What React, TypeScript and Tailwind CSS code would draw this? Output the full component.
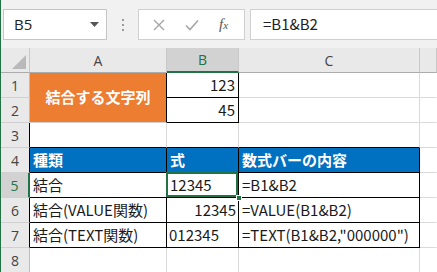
import { ReactNode } from 'react';

const JP = 'font-["Noto_Sans_CJK_JP",sans-serif]';

function Cell({
  r = 'border-r-[#dadada]',
  b = 'border-b-[#dadada]',
  className = '',
  children,
}: {
  r?: string;
  b?: string;
  className?: string;
  children?: ReactNode;
}) {
  return (
    <div
      className={`relative flex items-center overflow-hidden whitespace-nowrap border-r border-b text-[15px] text-[#1a1a1a] ${r} ${b} ${className}`}
    >
      {children}
    </div>
  );
}

function RowHead({
  n,
  selected,
  r = 'border-r-[#bdbdbd]',
}: {
  n: number;
  selected?: boolean;
  r?: string;
}) {
  return (
    <div
      className={`flex items-center justify-center border-b border-b-[#d0d0d0] font-["Open_Sans",sans-serif] text-[14px] ${
        selected
          ? 'border-r-2 border-r-[#217346] bg-[#d2d2d2] text-[#217346]'
          : `border-r bg-[#e9e9e9] text-[#444] ${r}`
      }`}
    >
      {n}
    </div>
  );
}

function ColHead({ label, selected }: { label: string; selected?: boolean }) {
  return (
    <div
      className={`flex items-center justify-center border-r border-r-[#c8c8c8] font-["Open_Sans",sans-serif] text-[14px] ${
        selected
          ? 'border-b-2 border-b-[#217346] bg-[#d2d2d2] text-[#217346]'
          : 'border-b border-b-[#ababab] bg-[#e9e9e9] text-[#444]'
      }`}
    >
      {label}
    </div>
  );
}

function Toolbar() {
  return (
    <div className="flex h-[48px] items-start bg-[#f1f1f1] pt-[9px] pl-[2px]">
      <div className="flex h-[31px] w-[104px] items-center justify-between border border-[#c6c6c6] bg-white pr-[7px] pl-[10px]">
        <span className='font-["Open_Sans",sans-serif] text-[15px] text-[#222]'>B5</span>
        <svg width="9" height="5" viewBox="0 0 9 5">
          <path d="M0 0h9L4.5 5z" fill="#555" />
        </svg>
      </div>
      <div className="flex h-[31px] w-[31px] flex-col items-center justify-center gap-[3px]">
        <span className="size-[2px] bg-[#9a9a9a]" />
        <span className="size-[2px] bg-[#9a9a9a]" />
        <span className="size-[2px] bg-[#9a9a9a]" />
      </div>
      <div className="flex h-[31px] w-[107px] items-center border border-[#d0d0d0] bg-white">
        <svg width="14" height="14" viewBox="0 0 14 14" className="ml-[13px]">
          <path d="M2 2l10 10M12 2L2 12" stroke="#a6a6a6" strokeWidth="1.4" />
        </svg>
        <svg width="16" height="14" viewBox="0 0 16 14" className="ml-[18px]">
          <path d="M2 7.5l4 4 8-9" stroke="#a6a6a6" strokeWidth="1.6" fill="none" />
        </svg>
        <span className='ml-[19px] font-["Liberation_Serif",serif] text-[15px] text-[#555] italic'>
          f<span className="text-[11px]">x</span>
        </span>
      </div>
      <div className="ml-[5px] flex h-[31px] flex-1 items-center border border-r-0 border-[#d0d0d0] bg-white pl-[12px]">
        <span className={`${JP} text-[15px] text-[#222]`}>=B1&amp;B2</span>
      </div>
    </div>
  );
}

export default function App() {
  const black = 'border-r-black';
  const blackB = 'border-b-black';
  return (
    <div className="h-[272px] w-[437px] overflow-hidden border-l border-l-[#217346] bg-[#f1f1f1]">
      <Toolbar />
      <div
        className={`grid grid-cols-[29px_137px_72px_181px_1fr] grid-rows-[25px_25px_25px_25px_25px_25px_25px_25px_25px] bg-white ${JP}`}
      >
        {/* header row */}
        <div className="relative border-r border-b border-r-[#c8c8c8] border-b-[#ababab] bg-[#e9e9e9]">
          <svg width="14" height="14" viewBox="0 0 14 14" className="absolute right-[3px] bottom-[3px]">
            <path d="M14 0v14H0z" fill="#b9b9b9" />
          </svg>
        </div>
        <ColHead label="A" />
        <ColHead label="B" selected />
        <ColHead label="C" />
        <ColHead label="" />

        {/* row 1 */}
        <RowHead n={1} />
        <div className="row-span-2 flex items-center justify-center border-r border-b border-r-black border-b-[#d0d0d0] bg-[#ed7d31] text-[15px] font-bold text-white">
          結合する文字列
        </div>
        <Cell r={black} b={blackB} className="justify-end pr-[3px]">
          123
        </Cell>
        <Cell />
        <Cell r="border-r-transparent" />

        {/* row 2 */}
        <RowHead n={2} />
        <Cell r={black} b={blackB} className="justify-end pr-[3px]">
          45
        </Cell>
        <Cell />
        <Cell r="border-r-transparent" />

        {/* row 3 */}
        <RowHead n={3} r="border-r-black" />
        <Cell b={blackB} />
        <Cell b={blackB} />
        <Cell b={blackB} />
        <Cell r="border-r-transparent" />

        {/* row 4 */}
        <RowHead n={4} r="border-r-black" />
        <Cell r={black} b={blackB} className="bg-[#0070c0] pl-[3px] font-bold text-white">
          種類
        </Cell>
        <Cell r={black} b={blackB} className="bg-[#0070c0] pl-[3px] font-bold text-white">
          式
        </Cell>
        <Cell r={black} b={blackB} className="bg-[#0070c0] pl-[3px] font-bold text-white">
          数式バーの内容
        </Cell>
        <Cell r="border-r-transparent" />

        {/* row 5 */}
        <RowHead n={5} selected />
        <Cell r={black} b={blackB} className="pl-[3px]">
          結合
        </Cell>
        <Cell r={black} b={blackB} className="overflow-visible! pl-[3px]">
          12345
          <span className="absolute -top-px -left-px h-[calc(100%+1px)] w-[calc(100%+1px)] border-2 border-[#217346]" />
          <span className="absolute -right-[4px] -bottom-[4px] z-10 size-[6px] border border-white bg-[#217346]" />
        </Cell>
        <Cell r={black} b={blackB} className="pl-[3px]">
          =B1&amp;B2
        </Cell>
        <Cell r="border-r-transparent" />

        {/* row 6 */}
        <RowHead n={6} r="border-r-black" />
        <Cell r={black} b={blackB} className="pl-[3px]">
          結合(VALUE関数)
        </Cell>
        <Cell r={black} b={blackB} className="justify-end pr-[2px]">
          12345
        </Cell>
        <Cell r={black} b={blackB} className="pl-[3px]">
          =VALUE(B1&amp;B2)
        </Cell>
        <Cell r="border-r-transparent" />

        {/* row 7 */}
        <RowHead n={7} r="border-r-black" />
        <Cell r={black} b={blackB} className="pl-[3px]">
          結合(TEXT関数)
        </Cell>
        <Cell r={black} b={blackB} className="pl-[2px]">
          012345
        </Cell>
        <Cell r={black} b={blackB} className="pl-[3px]">
          =TEXT(B1&amp;B2,"000000")
        </Cell>
        <Cell r="border-r-transparent" />

        {/* row 8 */}
        <RowHead n={8} />
        <Cell />
        <Cell />
        <Cell />
        <Cell r="border-r-transparent" />
      </div>
    </div>
  );
}
